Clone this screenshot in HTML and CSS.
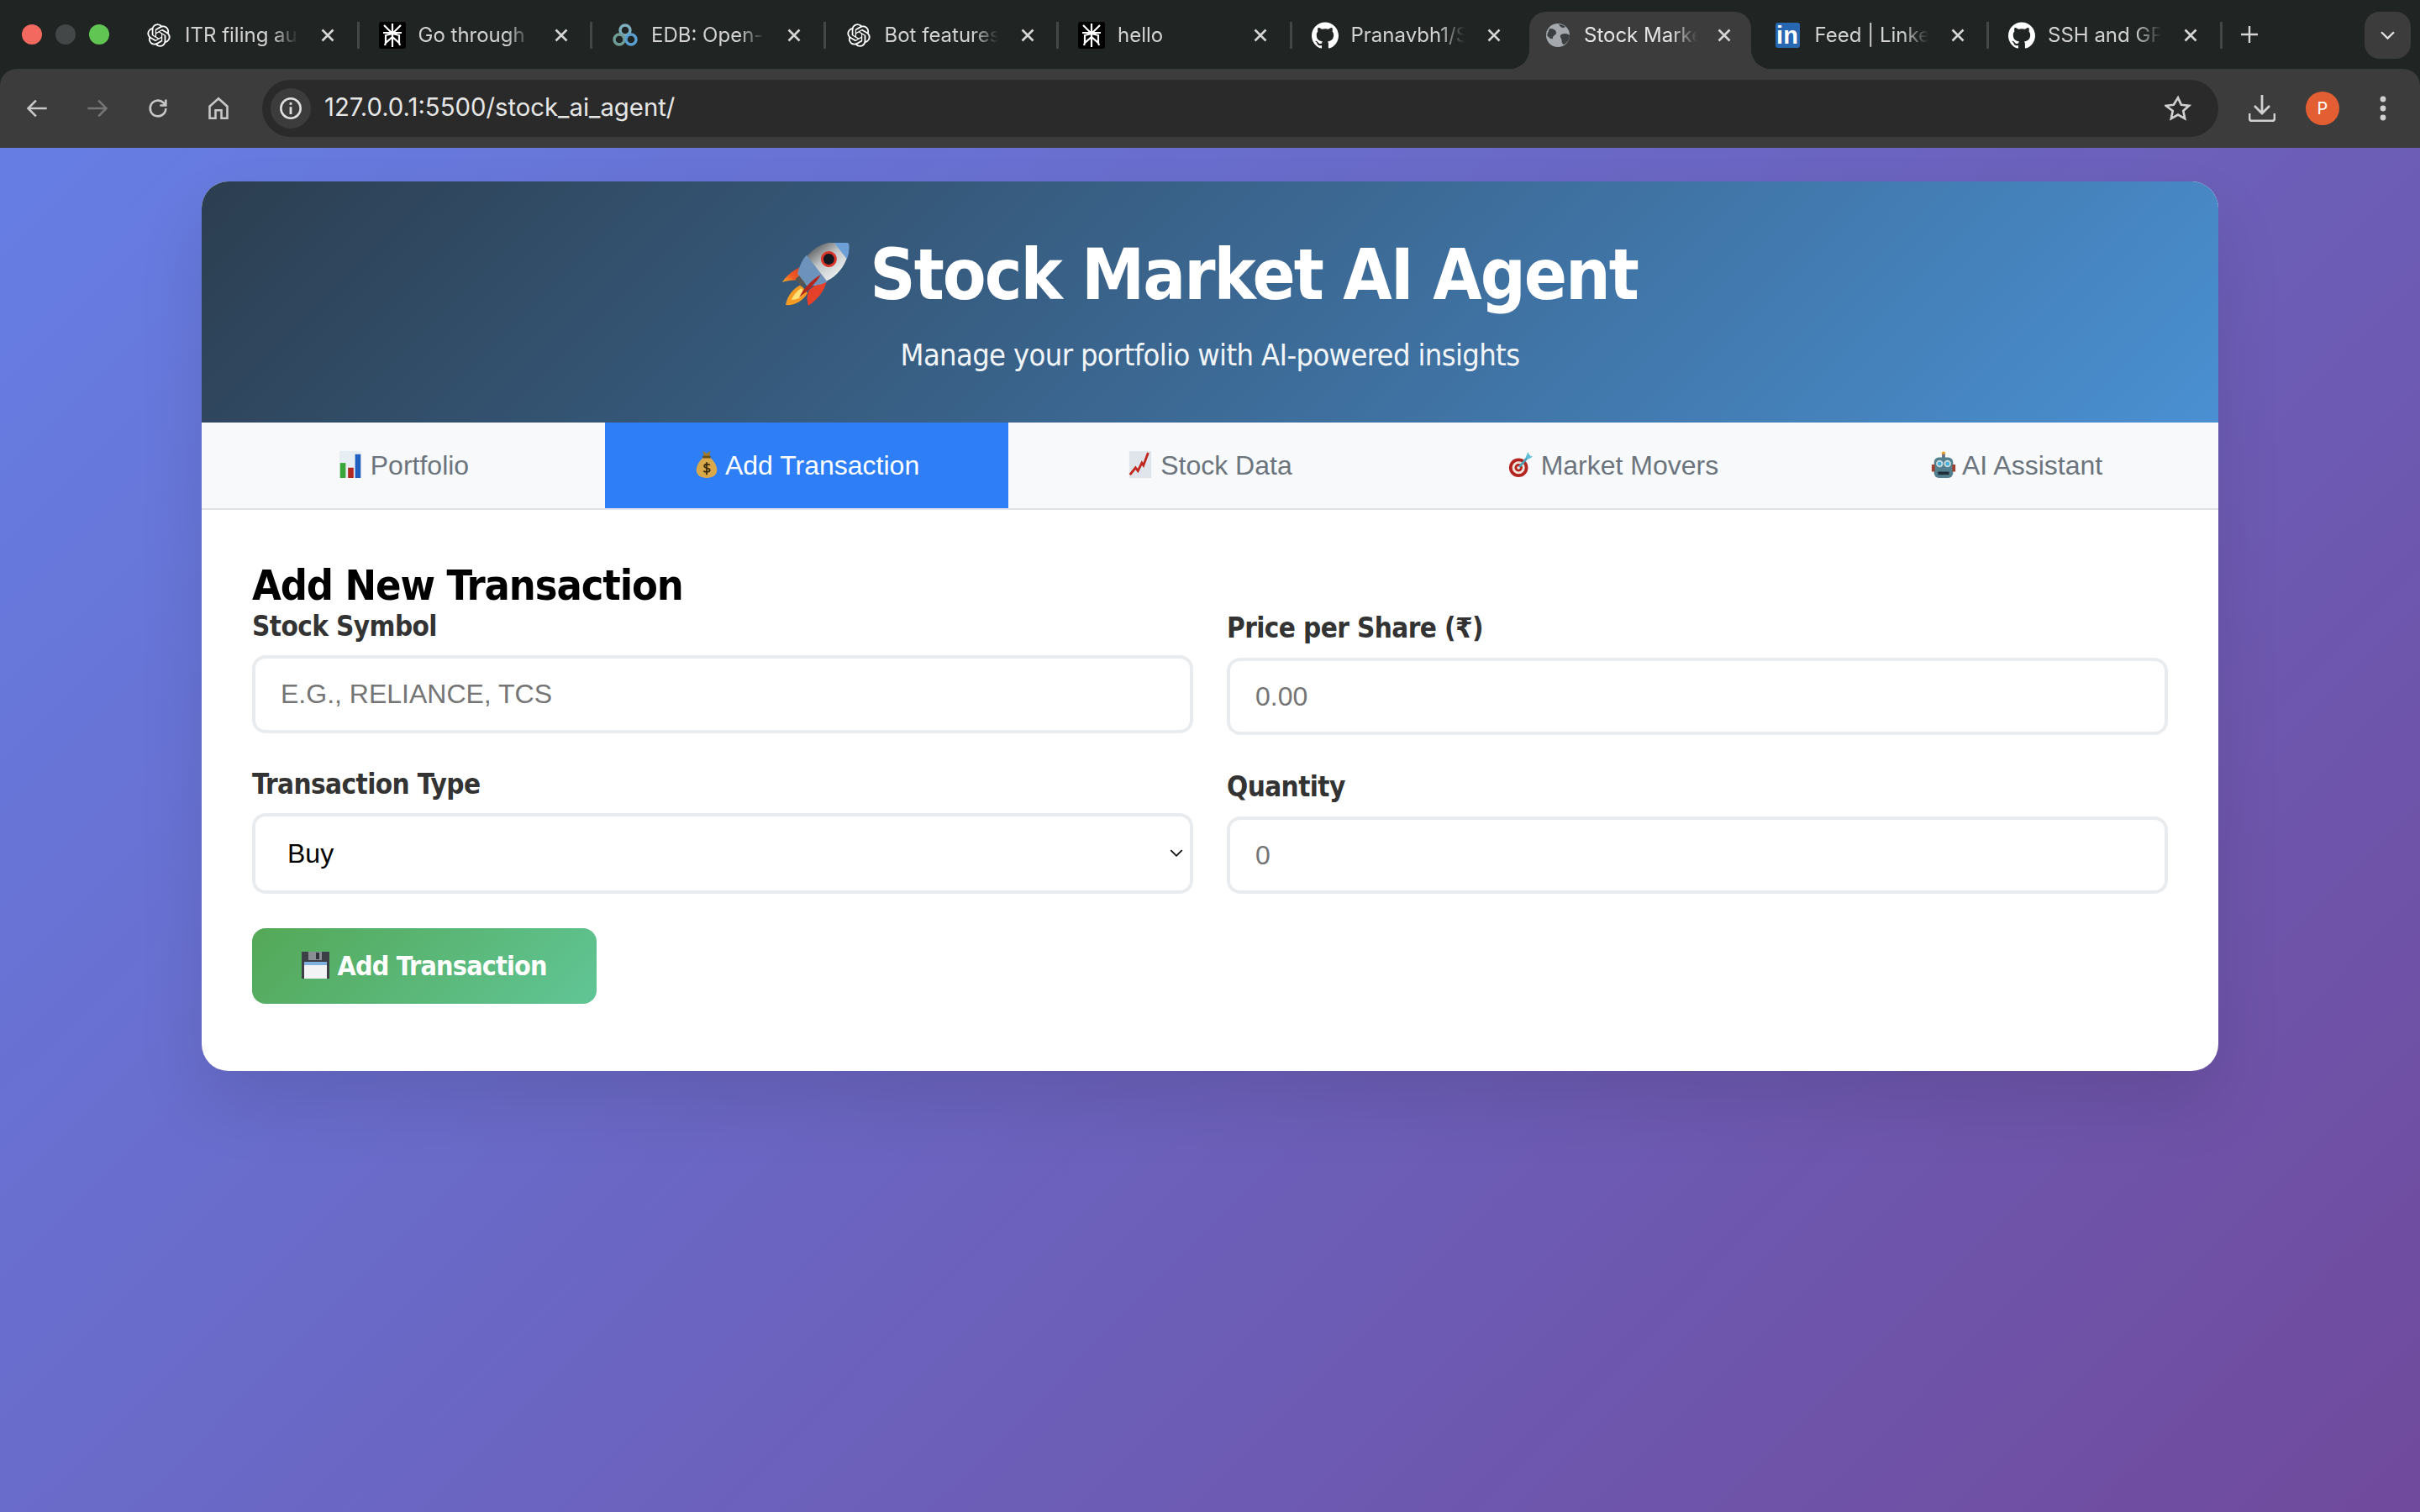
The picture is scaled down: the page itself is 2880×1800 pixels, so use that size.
FILE: index.html
```html
<!DOCTYPE html>
<html lang="en">
  <head>
    <meta charset="UTF-8" />
    <meta name="viewport" content="width=device-width, initial-scale=1.0" />
    <title>Stock Market AI Agent</title>
    <link rel="stylesheet" href="styles.css">
  </head>
  <body>
    <svg class="sprites" width="0" height="0">
      <symbol id="i-openai" viewBox="-2 -2 28 28"><path fill="#fff" d="M22.2819 9.8211a5.9847 5.9847 0 0 0-.5157-4.9108 6.0462 6.0462 0 0 0-6.5098-2.9A6.0651 6.0651 0 0 0 4.9807 4.1818a5.9847 5.9847 0 0 0-3.9977 2.9 6.0462 6.0462 0 0 0 .7427 7.0966 5.98 5.98 0 0 0 .511 4.9107 6.051 6.051 0 0 0 6.5146 2.9001A5.9847 5.9847 0 0 0 13.2599 24a6.0557 6.0557 0 0 0 5.7718-4.2058 5.9894 5.9894 0 0 0 3.9977-2.9001 6.0557 6.0557 0 0 0-.7475-7.0729zm-9.022 12.6081a4.4755 4.4755 0 0 1-2.8764-1.0408l.1419-.0804 4.7783-2.7582a.7948.7948 0 0 0 .3927-.6813v-6.7369l2.02 1.1686a.071.071 0 0 1 .038.052v5.5826a4.504 4.504 0 0 1-4.4945 4.4944zm-9.6607-4.1254a4.4708 4.4708 0 0 1-.5346-3.0137l.142.0852 4.783 2.7582a.7712.7712 0 0 0 .7806 0l5.8428-3.3685v2.3324a.0804.0804 0 0 1-.0332.0615L9.74 19.9502a4.4992 4.4992 0 0 1-6.1408-1.6464zM2.3408 7.8956a4.485 4.485 0 0 1 2.3655-1.9728V11.6a.7664.7664 0 0 0 .3879.6765l5.8144 3.3543-2.0201 1.1685a.0757.0757 0 0 1-.071 0l-4.8303-2.7865A4.504 4.504 0 0 1 2.3408 7.872zm16.5963 3.8558L13.1038 8.364 15.1192 7.2a.0757.0757 0 0 1 .071 0l4.8303 2.7913a4.4944 4.4944 0 0 1-.6765 8.1042v-5.6772a.79.79 0 0 0-.407-.667zm2.0107-3.0231l-.142-.0852-4.7735-2.7818a.7759.7759 0 0 0-.7854 0L9.409 9.2297V6.8974a.0662.0662 0 0 1 .0284-.0615l4.8303-2.7866a4.4992 4.4992 0 0 1 6.6802 4.66zM8.3065 12.863l-2.02-1.1638a.0804.0804 0 0 1-.038-.0567V6.0742a4.4992 4.4992 0 0 1 7.3757-3.4537l-.142.0805L8.704 5.459a.7948.7948 0 0 0-.3927.6813zm1.0976-2.3654l2.602-1.4998 2.6069 1.4998v2.9994l-2.5974 1.4997-2.6067-1.4997Z"/></symbol>
      <symbol id="i-github" viewBox="0 0 24 24"><path fill="#fff" d="M12 .297c-6.63 0-12 5.373-12 12 0 5.303 3.438 9.8 8.205 11.385.6.113.82-.258.82-.577 0-.285-.01-1.04-.015-2.04-3.338.724-4.042-1.61-4.042-1.61C4.422 18.07 3.633 17.7 3.633 17.7c-1.087-.744.084-.729.084-.729 1.205.084 1.838 1.236 1.838 1.236 1.07 1.835 2.809 1.305 3.495.998.108-.776.417-1.305.76-1.605-2.665-.3-5.466-1.332-5.466-5.93 0-1.31.465-2.38 1.235-3.22-.135-.303-.54-1.523.105-3.176 0 0 1.005-.322 3.3 1.23.96-.267 1.98-.399 3-.405 1.02.006 2.04.138 3 .405 2.28-1.552 3.285-1.23 3.285-1.23.645 1.653.24 2.873.12 3.176.765.84 1.23 1.91 1.23 3.22 0 4.61-2.805 5.625-5.475 5.92.42.36.81 1.096.81 2.22 0 1.606-.015 2.896-.03 3.286 0 .315.21.69.825.57C20.565 22.092 24 17.592 24 12.297c0-6.627-5.373-12-12-12"/></symbol>
      <symbol id="i-spider" viewBox="0 0 32 32">
        <rect width="32" height="32" rx="3" fill="#000"/>
        <path d="M16 2v28M6 4l10 10L26 4M5 13h22M16 14l-8 2v9l8-7 8 7v-9zM8 25l-1 3M24 25l1 3" fill="none" stroke="#fff" stroke-width="2.2"/>
      </symbol>
      <symbol id="i-edb" viewBox="0 0 32 32">
        <circle cx="16" cy="10" r="6" fill="none" stroke="#7fb0c0" stroke-width="3.4"/>
        <circle cx="9" cy="21" r="6" fill="none" stroke="#6f9c94" stroke-width="3.4"/>
        <circle cx="23" cy="21" r="6" fill="none" stroke="#5a9fd0" stroke-width="3.4"/>
      </symbol>
      <symbol id="i-close" viewBox="0 0 16 16"><path d="M1.500 1.500l13 13M14.500 1.500l-13 13" stroke="#d6d6d6" stroke-width="2.6" fill="none"/></symbol>
    </svg>

    <header class="browser">
      <div class="tab-strip">
        <div class="traffic">
          <span class="dot dot-red"></span>
          <span class="dot dot-grey"></span>
          <span class="dot dot-green"></span>
        </div>
        <div class="tab">
          <svg class="favicon"><use href="#i-openai"/></svg>
          <span class="tab-title">ITR filing aut</span>
          <svg class="tab-x"><use href="#i-close"/></svg>
        </div>
        <div class="tab">
          <svg class="favicon"><use href="#i-spider"/></svg>
          <span class="tab-title">Go through t</span>
          <svg class="tab-x"><use href="#i-close"/></svg>
        </div>
        <div class="tab">
          <svg class="favicon"><use href="#i-edb"/></svg>
          <span class="tab-title">EDB: Open-S</span>
          <svg class="tab-x"><use href="#i-close"/></svg>
        </div>
        <div class="tab">
          <svg class="favicon"><use href="#i-openai"/></svg>
          <span class="tab-title">Bot features</span>
          <svg class="tab-x"><use href="#i-close"/></svg>
        </div>
        <div class="tab">
          <svg class="favicon"><use href="#i-spider"/></svg>
          <span class="tab-title">hello</span>
          <svg class="tab-x"><use href="#i-close"/></svg>
        </div>
        <div class="tab no-sep">
          <svg class="favicon"><use href="#i-github"/></svg>
          <span class="tab-title">Pranavbh1/S</span>
          <svg class="tab-x"><use href="#i-close"/></svg>
        </div>
        <div class="tab tab-active no-sep">
          <svg class="favicon" viewBox="0 0 32 32">
            <circle cx="16" cy="16" r="14" fill="#a5a9ae"/>
            <path d="M6 8c5 0 8 2 8 5s-4 3-4 6-5 0-7-3zM20 15c4-2 8-1 10 1 0 5-3 9-7 11-3-1-2-5-3-7s-2-3 0-5zM17 3c3 0 6 1 8 3-3 2-6 1-8-3z" fill="#3c3f42"/>
          </svg>
          <span class="tab-title">Stock Marke</span>
          <svg class="tab-x"><use href="#i-close"/></svg>
        </div>
        <div class="tab">
          <span class="favicon favicon-in">in</span>
          <span class="tab-title">Feed | Linke</span>
          <svg class="tab-x"><use href="#i-close"/></svg>
        </div>
        <div class="tab">
          <svg class="favicon"><use href="#i-github"/></svg>
          <span class="tab-title">SSH and GP</span>
          <svg class="tab-x"><use href="#i-close"/></svg>
        </div>
        <svg class="new-tab" viewBox="0 0 20 20"><path d="M10 0v20M0 10h20" stroke="#d6d6d6" stroke-width="2.4"/></svg>
        <div class="tab-search">
          <svg viewBox="0 0 16 10" width="17" height="11"><path d="M1 1l7 7 7-7" fill="none" stroke="#e2e2e2" stroke-width="2.2"/></svg>
        </div>
      </div>

      <div class="toolbar">
        <div class="tool"><svg viewBox="0 0 24 24" width="28" height="28"><path d="M22 12H3M11 4l-8 8 8 8" fill="none" stroke="#c8c8c8" stroke-width="2.2"/></svg></div>
        <div class="tool"><svg viewBox="0 0 24 24" width="28" height="28"><path d="M2 12h19M13 4l8 8-8 8" fill="none" stroke="#757575" stroke-width="2.2"/></svg></div>
        <div class="tool"><svg viewBox="0 0 24 24" width="28" height="28"><path d="M20 12a8 8 0 1 1-2.5-5.8L20 9M20 3v6h-6" fill="none" stroke="#c8c8c8" stroke-width="2.2"/></svg></div>
        <div class="tool"><svg viewBox="0 0 24 24" width="28" height="30"><path d="M3 22V10l9-8 9 8v12h-6v-8H9v8z" fill="none" stroke="#c8c8c8" stroke-width="2.2"/></svg></div>
        <div class="omnibox">
          <span class="site-info"><svg viewBox="0 0 24 24" width="28" height="28"><circle cx="12" cy="12" r="10" fill="none" stroke="#e0e0e0" stroke-width="2.2"/><path d="M12 10.5V18M12 6v2.4" stroke="#e0e0e0" stroke-width="2.4"/></svg></span>
          <span class="url">127.0.0.1:5500/stock_ai_agent/</span>
          <svg class="star" viewBox="0 0 24 24" width="32" height="32"><path d="M12 2.5l2.9 6.3 6.9.8-5.1 4.7 1.4 6.8-6.1-3.4-6.1 3.4 1.4-6.8L1.200 9.600l6.900-.8z" fill="none" stroke="#d0d0d0" stroke-width="2"/></svg>
        </div>
        <div class="tool-group">
          <div class="tool"><svg viewBox="0 0 32 32" width="32" height="32"><path d="M16 0v22M7 13l9 9 9-9M1 22v6a3 3 0 0 0 3 3h24a3 3 0 0 0 3-3v-6" fill="none" stroke="#d0d0d0" stroke-width="2.800"/></svg></div>
          <div class="tool"><span class="avatar">P</span></div>
          <div class="tool"><svg viewBox="0 0 8 30" width="8" height="30"><circle cx="4" cy="4" r="3.400" fill="#d0d0d0"/><circle cx="4" cy="15" r="3.400" fill="#d0d0d0"/><circle cx="4" cy="26" r="3.400" fill="#d0d0d0"/></svg></div>
        </div>
      </div>
    </header>

    <main class="page">
      <div class="container">
        <div class="header">
          <h1>
            <svg class="emoji-rocket" viewBox="0 0 80 76">
              <defs>
                <linearGradient id="rocket-silver" x1="0" x2="1" y1="0" y2="0">
                  <stop offset="0" stop-color="#e8eaea"/>
                  <stop offset="0.55" stop-color="#c2c6c7"/>
                  <stop offset="1" stop-color="#6d7072"/>
                </linearGradient>
                <linearGradient id="rocket-fin" x1="1" x2="0" y1="0" y2="1">
                  <stop offset="0" stop-color="#d8301f"/>
                  <stop offset="0.7" stop-color="#ee5a24"/>
                  <stop offset="1" stop-color="#f7b32b"/>
                </linearGradient>
              </defs>
              <path d="M36 24C24 26 8 34 0 47c8-3 16-2 24-3z" fill="url(#rocket-fin)"/>
              <path d="M53 40c1 12-9 26-22 35-2-7-2-13 1-19z" fill="#e5402a"/>
              <path d="M22 50C14 54 6 62 4 74c10 1 20-4 26-14z" fill="#f59a23"/>
              <path d="M23 54c-5 3-10 8-12 14 6 0 12-3 15-8z" fill="#ffe27a"/>
              <g transform="translate(79 1) rotate(-128) scale(-1 1) rotate(180)">
                <path d="M0 0c13 8 20 24 20 38 0 14-7 28-11 32H-9c-4-4-11-18-11-32C-20 24-13 8 0 0z" fill="url(#rocket-silver)"/>
                <path d="M0 0c6 3.500 10 7.500 13 13h-26C-10 7.500-6 3.500 0 0z" fill="#6ea0d8"/>
                <path d="M-20 48h40c-1 8-7 18-11 22H-9c-4-4-10-14-11-22z" fill="#6d93bd"/>
                <circle cx="0" cy="30" r="9.500" fill="#d9352b"/>
                <circle cx="0" cy="30" r="6.500" fill="#14181f"/>
                <rect x="-6" y="70" width="12" height="6" fill="#555"/>
              </g>
              <path d="M46 38c-6 10-16 20-26 27l4-7c6-8 14-16 22-20z" fill="#b3261c"/>
            </svg>
            Stock Market AI Agent
          </h1>
          <p class="subtitle">Manage your portfolio with AI-powered insights</p>
        </div>

        <nav class="tabs">
          <button class="nav-tab">
            <svg class="emoji-tab" viewBox="0 0 28 34">
              <rect width="28" height="34" fill="#e6edf3"/>
              <rect x="1" y="15" width="7" height="19" fill="#3aa63a"/>
              <rect x="11" y="21" width="7" height="13" fill="#b0281f"/>
              <rect x="20" y="4" width="7" height="30" fill="#1f5fc0"/>
            </svg>
            Portfolio
          </button>
          <button class="nav-tab nav-tab-active">
            <svg class="emoji-tab" viewBox="0 0 28 34">
              <path d="M9 0l5 3 5-3-2 8h-6z" fill="#a07a2c"/>
              <path d="M10 8h8c6 5 9 11 9 16 0 7-6 10-13 10S1 31 1 24c0-5 3-11 9-16z" fill="#d9a84a"/>
              <rect x="9" y="6" width="10" height="3" fill="#6a4f1c"/>
              <path d="M18 18c-1-2-7-2-7 1s7 2 7 5-6 3-8 1M14 14v16" fill="none" stroke="#3a2c0c" stroke-width="1.900"/>
            </svg>
            Add Transaction
          </button>
          <button class="nav-tab">
            <svg class="emoji-tab" viewBox="0 0 28 34">
              <rect width="28" height="34" fill="#dfe5ea"/>
              <path d="M1 30l7-9 3 4 5-10 2 3 6-16" fill="none" stroke="#c0281f" stroke-width="3"/>
            </svg>
            Stock Data
          </button>
          <button class="nav-tab">
            <svg class="emoji-tab" viewBox="0 0 30 34">
              <circle cx="12" cy="21" r="12" fill="#b32520"/>
              <circle cx="12" cy="21" r="8" fill="#f0e6dc"/>
              <circle cx="12" cy="21" r="5" fill="#b32520"/>
              <circle cx="12" cy="21" r="2" fill="#f0e6dc"/>
              <path d="M13 20L26 5" stroke="#4fa0b8" stroke-width="3"/>
              <path d="M24 1l2 5 4 1-5 3-4-2z" fill="#5fc0d8"/>
            </svg>
            Market Movers
          </button>
          <button class="nav-tab">
            <svg class="emoji-tab" viewBox="0 0 30 34">
              <circle cx="15" cy="3" r="2.500" fill="#e8a030"/>
              <rect x="13" y="4" width="4" height="5" fill="#6a6f88"/>
              <rect x="3" y="8" width="24" height="26" rx="6" fill="#53808e"/>
              <rect x="0" y="17" width="4" height="9" fill="#a04030"/>
              <rect x="26" y="17" width="4" height="9" fill="#a04030"/>
              <circle cx="10" cy="16" r="4.500" fill="#c8d8de"/>
              <circle cx="20" cy="16" r="4.500" fill="#c8d8de"/>
              <circle cx="10" cy="16" r="2.500" fill="#40b0d8"/>
              <circle cx="20" cy="16" r="2.500" fill="#40b0d8"/>
              <rect x="8" y="26" width="14" height="4" fill="#20303a"/>
            </svg>
            AI Assistant
          </button>
        </nav>

        <section class="tab-content">
          <h2>Add New Transaction</h2>
          <form class="form-grid">
            <div class="form-col">
              <div class="form-group">
                <label for="symbol">Stock Symbol</label>
                <input class="form-input input-left" type="text" id="symbol" placeholder="E.G., RELIANCE, TCS" />
              </div>
              <div class="form-group">
                <label for="type">Transaction Type</label>
                <div class="select-wrap">
                  <select class="form-select" id="type">
                    <option>Buy</option>
                    <option>Sell</option>
                  </select>
                  <svg class="select-arrow" viewBox="0 0 14 9" width="16" height="10"><path d="M1 1l6 6 6-6" fill="none" stroke="#111" stroke-width="1.600"/></svg>
                </div>
              </div>
              <button class="btn-add" type="button">
                <svg class="emoji-floppy" viewBox="0 0 33 32">
                  <path d="M0 0h33v32H0z" fill="#3c4046"/>
                  <rect x="8" y="0" width="16" height="10" fill="#8a8f96"/>
                  <rect x="17" y="1" width="4" height="8" fill="#33373c"/>
                  <rect x="3" y="12" width="27" height="20" fill="#f2f3f5"/>
                  <rect x="3" y="12" width="27" height="4" fill="#7fb0e0"/>
                </svg>
                Add Transaction
              </button>
            </div>
            <div class="form-col form-col-right">
              <div class="form-group">
                <label for="price">Price per Share (₹)</label>
                <input class="form-input" type="number" id="price" placeholder="0.00" />
              </div>
              <div class="form-group">
                <label for="qty">Quantity</label>
                <input class="form-input" type="number" id="qty" placeholder="0" />
              </div>
            </div>
          </form>
        </section>
      </div>
    </main>
  </body>
</html>
```

FILE: styles.css
```css
* {
  box-sizing: border-box;
}
body {
  margin: 0;
  height: 1800px;
  display: flex;
  flex-direction: column;
  font-family: 'DejaVu Sans Condensed', 'DejaVu Sans', sans-serif;
  background: #202423;
  overflow: hidden;
}
.sprites {
  display: block;
  height: 0;
}

/* browser chrome */
.browser {
  height: 176px;
  flex: none;
  background: #202423;
  font-family: 'Inter', sans-serif;
}
.tab-strip {
  display: flex;
  align-items: flex-start;
  height: 82px;
}
.traffic {
  width: 150px;
  flex: none;
  display: flex;
  gap: 16px;
  padding: 29px 0 0 26px;
}
.dot {
  width: 24px;
  height: 24px;
  border-radius: 50%;
}
.dot-red { background: #f2695f; }
.dot-grey { background: #444747; }
.dot-green { background: #61c554; }
.tab {
  position: relative;
  width: 277.5px;
  height: 68px;
  margin-top: 14px;
  padding: 12px 0 0 23px;
  flex: none;
  display: flex;
  align-items: flex-start;
  color: #d2d2d2;
  font-size: 24px;
  line-height: 32px;
}
.tab::after {
  content: "";
  position: absolute;
  right: 0;
  top: 12px;
  width: 3px;
  height: 32px;
  background: #444747;
}
.tab.no-sep::after {
  display: none;
}
.tab-active {
  width: 264px;
  margin-left: 5px;
  margin-right: 5.5px;
  padding-left: 18px;
  background: #3c3c3c;
  border-radius: 20px 20px 0 0;
  color: #e4e4e4;
}
.tab-active::before,
.tab-active.no-sep::after {
  content: "";
  display: block;
  position: absolute;
  bottom: 0;
  top: auto;
  width: 24px;
  height: 24px;
  background: #3c3c3c;
}
.tab-active::before {
  left: -24px;
  -webkit-mask-image: radial-gradient(circle at 0 0, transparent 24px, #000 24.5px);
  mask-image: radial-gradient(circle at 0 0, transparent 24px, #000 24.5px);
}
.tab-active.no-sep::after {
  right: -24px;
  -webkit-mask-image: radial-gradient(circle at 100% 0, transparent 24px, #000 24.5px);
  mask-image: radial-gradient(circle at 100% 0, transparent 24px, #000 24.5px);
}
.tab-active .tab-title {
  width: 152px;
}
.favicon {
  width: 32px;
  height: 32px;
  flex: none;
}
.favicon-in {
  display: block;
  height: 30px;
  width: 29px;
  margin: 1px 3px 1px 0;
  border-radius: 3px;
  background: #2867b2;
  color: #fff;
  font: bold 29px/30px 'Liberation Sans', sans-serif;
  text-align: center;
}
.tab-title {
  width: 155px;
  margin-left: 15px;
  flex: none;
  white-space: nowrap;
  -webkit-mask-image: linear-gradient(to right, #000 105px, transparent 135px);
  mask-image: linear-gradient(to right, #000 105px, transparent 135px);
}
.tab-x {
  width: 16px;
  height: 16px;
  margin: 8px 0 0 7px;
  flex: none;
}
.new-tab {
  width: 20px;
  height: 20px;
  margin: 31px 0 0 22px;
  flex: none;
}
.tab-search {
  width: 55px;
  height: 56px;
  margin: 14px 0 0 127px;
  flex: none;
  display: flex;
  align-items: center;
  justify-content: center;
  background: #3c3c3c;
  border-radius: 18px;
}
.toolbar {
  height: 94px;
  padding-left: 8px;
  display: flex;
  align-items: center;
  background: #3c3c3c;
  border-radius: 20px 20px 0 0;
}
.tool {
  width: 72px;
  height: 68px;
  flex: none;
  display: flex;
  align-items: center;
  justify-content: center;
}
.omnibox {
  flex: 1;
  height: 68px;
  margin-left: 16px;
  padding: 0 32px 0 10px;
  display: flex;
  align-items: center;
  background: #2a2a2a;
  border-radius: 34px;
}
.site-info {
  width: 48px;
  height: 48px;
  flex: none;
  display: flex;
  align-items: center;
  justify-content: center;
  background: #3c3c3c;
  border-radius: 50%;
}
.url {
  flex: 1;
  margin-left: 16px;
  padding-bottom: 3px;
  color: #e6e6e6;
  font-size: 29.300px;
}
.tool-group {
  display: flex;
  margin-left: 16px;
  padding-right: 8px;
}
.avatar {
  width: 40px;
  height: 40px;
  border-radius: 50%;
  background: #e35f33;
  color: #fff;
  font-size: 20px;
  line-height: 40px;
  text-align: center;
}

/* app page */
.page {
  flex: 1;
  padding: 40px 240px;
  background: linear-gradient(135deg, #667ee4 0%, #704a9c 100%);
}
.container {
  height: 1059px;
  background: #fff;
  border-radius: 32px;
  box-shadow: 0 40px 80px rgba(0, 0, 0, 0.1);
  overflow: hidden;
}
.header {
  height: 287px;
  padding-top: 63px;
  background: linear-gradient(135deg, #2c3e50 0%, #4a90d2 100%);
  color: #fff;
  text-align: center;
}
h1 {
  margin: 0;
  font-size: 84px;
  line-height: 96px;
  letter-spacing: -2px;
  font-weight: 700;
}
.emoji-rocket {
  width: 80px;
  height: 76px;
  vertical-align: -9px;
}
.subtitle {
  margin: 26px 0 0;
  font-size: 36px;
  line-height: 44px;
  letter-spacing: -0.64px;
  color: #f2f5f8;
}
.tabs {
  display: flex;
  height: 104px;
  background: #f8f9fa;
  border-bottom: 2px solid #dee2e6;
}
.nav-tab {
  flex: 1;
  padding: 0;
  border: none;
  background: none;
  color: #6c757d;
  font-family: 'Liberation Sans', sans-serif;
  font-size: 32px;
  line-height: 102px;
  cursor: pointer;
}
.nav-tab-active {
  background: #2d7ef7;
  color: #fff;
}
.emoji-tab {
  width: 30px;
  height: 32px;
  vertical-align: -4px;
}
.tab-content {
  padding: 60px 60px 80px;
}
h2 {
  margin: 0;
  height: 59px;
  font-size: 50px;
  line-height: 60px;
  letter-spacing: -1.1px;
  font-weight: 700;
  color: #000;
}
.form-grid {
  display: grid;
  grid-template-columns: 1fr 1fr;
  column-gap: 40px;
}
.form-group {
  margin-bottom: 41px;
}
.form-group label {
  display: block;
  height: 40px;
  margin-bottom: 14px;
  color: #333;
  font-size: 33px;
  line-height: 40px;
  letter-spacing: -0.6px;
  font-weight: 700;
}
.form-col-right .form-group {
  margin-bottom: 40px;
}
.form-col-right .form-group label {
  margin-bottom: 17px;
  line-height: 44px;
}
.form-input,
.form-select {
  display: block;
  width: 100%;
  height: 92px;
  padding: 0 30px;
  border: 4px solid #e9ecef;
  border-radius: 16px;
  background: #fff;
  font-family: 'Liberation Sans', sans-serif;
  font-size: 32px;
  color: #333;
  appearance: none;
  -moz-appearance: textfield;
}
.input-left {
  height: 93px;
}
.form-input::placeholder {
  color: #757575;
}
.select-wrap {
  position: relative;
}
.form-select {
  height: 96px;
  padding-left: 38px;
  color: #000;
}
.select-arrow {
  position: absolute;
  right: 12px;
  top: 43px;
}
.btn-add {
  display: block;
  width: 410px;
  height: 90px;
  padding: 0;
  border: none;
  border-radius: 16px;
  background: linear-gradient(135deg, #54a857 0%, #60c596 100%);
  color: #fff;
  font-family: 'DejaVu Sans Condensed', 'DejaVu Sans', sans-serif;
  font-size: 32px;
  letter-spacing: -0.8px;
  font-weight: 700;
  cursor: pointer;
}
.emoji-floppy {
  width: 33px;
  height: 32px;
  vertical-align: -4px;
}
```
